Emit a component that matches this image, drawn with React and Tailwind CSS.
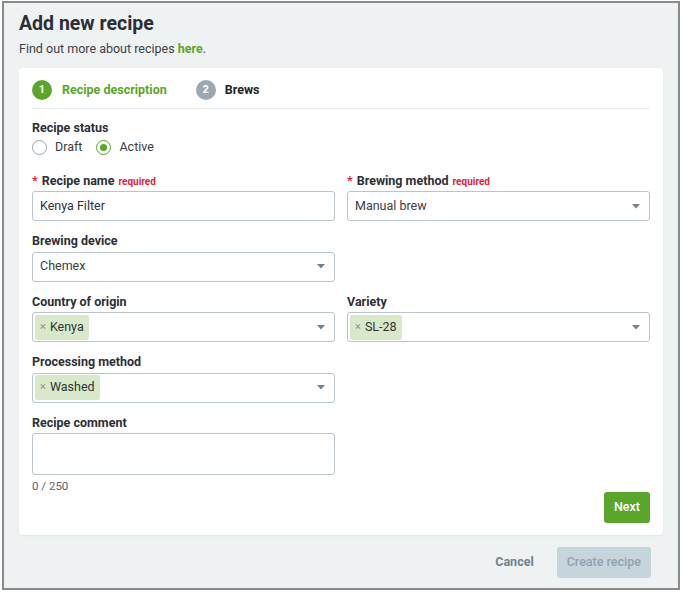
import { useState } from 'react';

function Caret() {
  return (
    <svg className="w-[8px] h-[5px] shrink-0" viewBox="0 0 8 5"><path d="M0 0h8L4 4.5z" fill="#76818b" /></svg>
  );
}

function Label({ children, required }) {
  return (
    <div className="h-[20px] flex items-center text-[12.5px] font-bold text-[#2c2f36]">
      {required && <span className="text-[#e0243a] mr-1">*</span>}
      {children}
      {required && <span className="text-[#e0243a] text-[10px] ml-1">required</span>}
    </div>
  );
}

function Select({ value, tag }) {
  return (
    <div className={`h-[30px] border border-[#b9c4cd] rounded-[3px] bg-white flex items-center pr-[9px] ${tag ? 'pl-[2px]' : 'pl-[7px]'}`}>
      <div className="flex-1 flex items-center">
        {tag ? (
          <span className="h-[25px] px-[5px] bg-[#d8e9c9] rounded-[2px] flex items-center text-[12.5px] text-[#2f3338]">
            <span className="text-[#8a9299] text-[11px] mr-[4px]">×</span>{tag}
          </span>
        ) : (
          <span className="text-[12.5px] text-[#3a3e44]">{value}</span>
        )}
      </div>
      <Caret />
    </div>
  );
}

function Field({ label, required, children }) {
  return (
    <div className="flex flex-col">
      <Label required={required}>{label}</Label>
      {children}
    </div>
  );
}

export default function App() {
  const [status, setStatus] = useState('active');

  return (
    <div className="w-[682px] h-[593px] bg-white pt-[1px] pl-[2px]" style={{ fontFamily: 'Roboto, "Liberation Sans", sans-serif' }}>
      <div className="w-[678px] h-[589px] border-2 border-[#8a8a8a] bg-[#eff2f3] px-[15px] flex flex-col">
        <h1 className="text-[19.5px] font-bold text-[#2b2e35] mt-[8px] leading-[26px]">Add new recipe</h1>
        <p className="text-[12.5px] text-[#3d4148] mt-[4px] leading-[16px]">
          Find out more about recipes <span className="text-[#5aa62a] font-bold">here</span>.
        </p>

        <div className="mt-[11px] bg-white rounded-[4px] shadow-[0_1px_2px_rgba(0,0,0,0.06)] px-[13px] pb-[12px]">
          <div className="flex items-start pt-[12px] h-[41px] border-b border-[#e8ecee]">
            <div className="flex items-center gap-[10px]">
              <span className="w-[20px] h-[20px] rounded-full bg-[#5aa62a] text-white text-[11px] font-bold flex items-center justify-center">1</span>
              <span className="text-[12.5px] font-bold text-[#5aa62a]">Recipe description</span>
            </div>
            <div className="flex items-center gap-[9px] ml-[29px]">
              <span className="w-[20px] h-[20px] rounded-full bg-[#9ba8b4] text-white text-[11px] font-bold flex items-center justify-center">2</span>
              <span className="text-[12.5px] font-bold text-[#1f2226]">Brews</span>
            </div>
          </div>

          <div className="mt-[9px]">
            <Label>Recipe status</Label>
            <div className="flex items-center gap-[14px] h-[18px]">
              <label className="flex items-center gap-[8px] cursor-pointer" onClick={() => setStatus('draft')}>
                <span className={`w-[15px] h-[15px] rounded-full border flex items-center justify-center ${status === 'draft' ? 'border-[#5aa62a]' : 'border-[#9aa6b1]'}`}>
                  {status === 'draft' && <span className="w-[7px] h-[7px] rounded-full bg-[#5aa62a]" />}
                </span>
                <span className="text-[12.5px] text-[#3a3e44]">Draft</span>
              </label>
              <label className="flex items-center gap-[8px] cursor-pointer" onClick={() => setStatus('active')}>
                <span className={`w-[15px] h-[15px] rounded-full border flex items-center justify-center ${status === 'active' ? 'border-[#5aa62a]' : 'border-[#9aa6b1]'}`}>
                  {status === 'active' && <span className="w-[7px] h-[7px] rounded-full bg-[#5aa62a]" />}
                </span>
                <span className="text-[12.5px] text-[#3a3e44]">Active</span>
              </label>
            </div>
          </div>

          <div className="grid grid-cols-2 gap-x-[12px] gap-y-[10.5px] mt-[15px]">
            <Field label="Recipe name" required>
              <div className="h-[30px] border border-[#b9c4cd] rounded-[3px] flex items-center px-[7px] text-[12.5px] text-[#2f3338]">Kenya Filter</div>
            </Field>
            <Field label="Brewing method" required>
              <Select value="Manual brew" />
            </Field>
            <Field label="Brewing device">
              <Select value="Chemex" />
            </Field>
            <div />
            <Field label="Country of origin">
              <Select tag="Kenya" />
            </Field>
            <Field label="Variety">
              <Select tag="SL-28" />
            </Field>
            <Field label="Processing method">
              <Select tag="Washed" />
            </Field>
            <div />
            <div className="flex flex-col">
              <Label>Recipe comment</Label>
              <div className="h-[42px] border border-[#b9c4cd] rounded-[3px]" />
              <div className="text-[11.5px] text-[#5e646b] mt-[4px] leading-[14px]">0 / 250</div>
            </div>
          </div>

          <div className="flex justify-end -mt-[1px]">
            <button className="h-[31px] px-[10px] bg-[#5aa62a] text-white text-[12.5px] font-medium rounded-[3px]">Next</button>
          </div>
        </div>

        <div className="flex justify-end items-center gap-[23px] mt-[12px] pr-[12px]">
          <button className="text-[12.5px] font-bold text-[#6f8291]">Cancel</button>
          <button className="h-[31px] px-[10px] whitespace-nowrap bg-[#c6d4dc] text-[#8ea3b1] text-[12.5px] font-medium rounded-[3px]">Create recipe</button>
        </div>
      </div>
    </div>
  );
}
